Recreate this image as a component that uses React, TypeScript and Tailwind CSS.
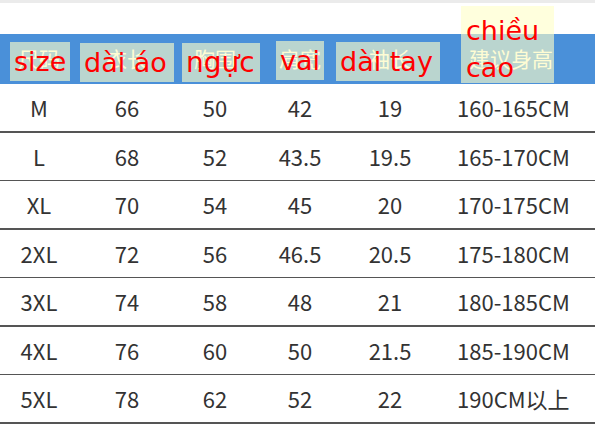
import React from "react";

const rows = [
  ["M", "66", "50", "42", "19", "160-165CM"],
  ["L", "68", "52", "43.5", "19.5", "165-170CM"],
  ["XL", "70", "54", "45", "20", "170-175CM"],
  ["2XL", "72", "56", "46.5", "20.5", "175-180CM"],
  ["3XL", "74", "58", "48", "21", "180-185CM"],
  ["4XL", "76", "60", "50", "21.5", "185-190CM"],
  ["5XL", "78", "62", "52", "22", "190CM以上"],
];

const heads = ["尺码", "衣长", "胸围", "肩宽", "袖长"];

const cjk = { fontFamily: '"Noto Sans CJK SC", "Noto Sans", sans-serif' };
const lbl = { fontFamily: '"DejaVu Sans", Verdana, sans-serif' };

export default function App() {
  return (
    <div className="relative w-[595px] h-[429px] bg-white overflow-hidden" style={cjk}>
      <div className="h-[3px] bg-[#ebebeb]" />
      <div className="h-[31px]" />
      <div className="h-[50px] bg-[#4a90d9] grid grid-cols-[78px_98px_78px_92px_88px_161px] items-center text-[21px] text-[#fbf8e8]">
        {heads.map((h) => (
          <div key={h} className="text-center">{h}</div>
        ))}
        <div className="pl-[35px]">建议身高</div>
      </div>
      {rows.map((r) => (
        <div key={r[0]}>
          <div className="h-[47px] grid grid-cols-[78px_98px_78px_92px_88px_161px] items-center text-[22px] text-[#333333]">
            {r.slice(0, 5).map((c, i) => (
              <div key={i} className="text-center">{c}</div>
            ))}
            <div className="pl-[23px]">{r[5]}</div>
          </div>
          <div className="h-[1.5px] bg-[#555555]" />
        </div>
      ))}

      <div className="absolute left-[10px] top-[42px] w-[60px] h-[39px] bg-[rgba(255,255,200,0.62)] flex items-center pl-[4px] text-[27px] text-[#ff0000] leading-none" style={lbl}>size</div>
      <div className="absolute left-[80px] top-[43px] w-[94px] h-[39px] bg-[rgba(255,255,200,0.62)] flex items-center pl-[4px] text-[27px] text-[#ff0000] leading-none whitespace-nowrap" style={lbl}>dài áo</div>
      <div className="absolute left-[182px] top-[43px] w-[78px] h-[39px] bg-[rgba(255,255,200,0.62)] flex items-center pl-[4px] text-[28px] text-[#ff0000] leading-none" style={lbl}>ngực</div>
      <div className="absolute left-[276px] top-[41px] w-[48px] h-[39px] bg-[rgba(255,255,200,0.62)] flex items-center pl-[4px] text-[27px] text-[#ff0000] leading-none" style={lbl}>vai</div>
      <div className="absolute left-[336px] top-[42px] w-[104px] h-[39px] bg-[rgba(255,255,200,0.62)] flex items-center pl-[4px] text-[27px] text-[#ff0000] leading-none whitespace-nowrap" style={lbl}>dài tay</div>
      <div className="absolute left-[461px] top-[6px] w-[93px] h-[77px] bg-[rgba(255,255,200,0.62)] pl-[5px] pt-[6px] text-[27px] text-[#ff0000] leading-[37px]" style={lbl}>
        <div>chiều</div>
        <div>cao</div>
      </div>
    </div>
  );
}
